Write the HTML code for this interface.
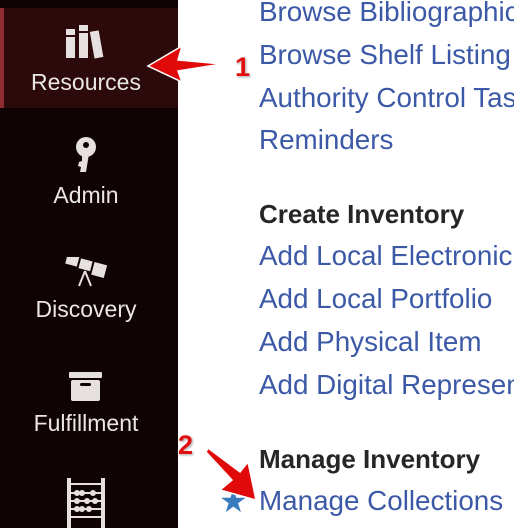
<!DOCTYPE html>
<html><head><style>
body{margin:0;width:514px;height:528px;overflow:hidden;background:#fff;font-family:"Liberation Sans",sans-serif;position:relative}
#sb{position:absolute;left:0;top:0;width:178px;height:528px;background:#100304}
#sel{position:absolute;left:0;top:8px;width:178px;height:100px;background:#2c0a0b;border-left:4px solid #8e2b33;box-sizing:border-box}
.lbl{position:absolute;width:172px;left:0;text-align:center;color:#ebe6e6;font-size:23px}
.t{position:absolute;left:259px;font-size:27.8px;color:#3b59a6;white-space:nowrap;line-height:30px}
.h{color:#262626;font-weight:bold;font-size:26px}
.num{position:absolute;color:#e01010;font-weight:bold;font-size:27px;text-shadow:0 0 2px #fff,1px 1px 2px #888}
</style></head><body>
<div id="sb"></div><div id="sel"></div>
<svg style="position:absolute;left:66px;top:25px" width="40" height="36" viewBox="0 0 40 36">
<rect x="0" y="4" width="9" height="29" fill="#e6e0e0"/><rect x="13" y="0" width="9" height="33" fill="#e6e0e0"/>
<rect x="26" y="6" width="9" height="27" fill="#e6e0e0" transform="rotate(-10 30 19)"/>
<rect x="0" y="10" width="9" height="2" fill="#2c0a0b"/><rect x="13" y="6" width="9" height="2" fill="#2c0a0b"/>
</svg>
<div class="lbl" style="top:69px">Resources</div>
<svg style="position:absolute;left:74px;top:136px" width="24" height="38" viewBox="0 0 24 38">
<circle cx="12" cy="11" r="10" fill="#e6e0e0"/><circle cx="12" cy="9" r="3" fill="#100304"/>
<path d="M8 18 L15 18 L12 36 L6 36 L7 31 L4 30 L5 26 L8 25Z" fill="#e6e0e0"/>
</svg>
<div class="lbl" style="top:182px">Admin</div>
<svg style="position:absolute;left:63px;top:257px" width="46" height="30" viewBox="0 0 46 30">
<g transform="rotate(15 23 10)"><rect x="2" y="2" width="12" height="10" fill="#e6e0e0"/><rect x="16" y="3" width="12" height="10" fill="#e6e0e0"/><rect x="30" y="3" width="13" height="13" fill="#e6e0e0"/></g>
<path d="M22 14 L16 29 M22 14 L28 29" stroke="#e6e0e0" stroke-width="2"/>
</svg>
<div class="lbl" style="top:296px">Discovery</div>
<svg style="position:absolute;left:69px;top:372px" width="34" height="30" viewBox="0 0 34 30">
<rect x="0" y="0" width="33" height="6" rx="1" fill="#e6e0e0"/><rect x="2" y="8" width="29" height="21" rx="2" fill="#e6e0e0"/><rect x="11" y="11" width="11" height="3" rx="1.5" fill="#100304"/>
</svg>
<div class="lbl" style="top:410px">Fulfillment</div>
<svg style="position:absolute;left:67px;top:478px" width="38" height="50" viewBox="0 0 38 50">
<rect x="0" y="0" width="4" height="50" fill="#e6e0e0"/><rect x="34" y="0" width="4" height="50" fill="#e6e0e0"/>
<g fill="#e6e0e0"><rect x="4" y="5" width="30" height="2"/><rect x="4" y="14" width="30" height="2"/><rect x="4" y="22" width="30" height="2"/><rect x="4" y="30" width="30" height="2"/><rect x="4" y="38" width="30" height="2"/>
<circle cx="10" cy="15" r="3"/><circle cx="15" cy="15" r="3"/><circle cx="26" cy="15" r="3"/><circle cx="10" cy="23" r="3"/><circle cx="20" cy="23" r="3"/><circle cx="28" cy="23" r="3"/><circle cx="10" cy="31" r="3"/><circle cx="15" cy="31" r="3"/><circle cx="22" cy="31" r="3"/></g>
</svg>
<div class="t" style="top:-3px">Browse Bibliographic</div>
<div class="t" style="top:40px">Browse Shelf Listing</div>
<div class="t" style="top:83px">Authority Control Tas</div>
<div class="t" style="top:125px">Reminders</div>
<div class="t h" style="top:199px">Create Inventory</div>
<div class="t" style="top:241px">Add Local Electronic</div>
<div class="t" style="top:284px">Add Local Portfolio</div>
<div class="t" style="top:327px">Add Physical Item</div>
<div class="t" style="top:370px">Add Digital Represen</div>
<div class="t h" style="top:444px">Manage Inventory</div>
<div class="t" style="top:486px">Manage Collections</div>
<div style="position:absolute;left:219px;top:482px;color:#3a7bbf;font-size:32px">★</div>
<svg style="position:absolute;left:0;top:0" width="514" height="528">
<path d="M148 66 L182 46 L178 60 L222 64 L178 71 L182 82Z" fill="#e00a0a" stroke="#fff" stroke-width="1.5"/>
<path d="M208 448 L240 472 L248 462 L256 500 L220 490 L232 480 L206 452Z" fill="#e00a0a" stroke="#fff" stroke-width="1.5"/>
</svg>
<div class="num" style="left:235px;top:52px">1</div>
<div class="num" style="left:178px;top:430px">2</div>
</body></html>
